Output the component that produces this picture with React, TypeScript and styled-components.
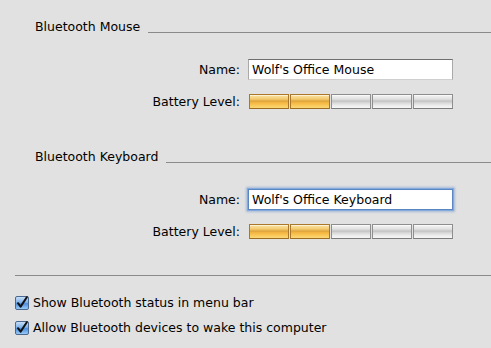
import React from "react";
import styled, { createGlobalStyle } from "styled-components";

const Global = createGlobalStyle`
  html, body { margin: 0; padding: 0; }
  body {
    background: #e1e1e1;
    font-family: "DejaVu Sans", "Liberation Sans", sans-serif;
    font-size: 12.5px;
    color: #000;
  }
`;

const Page = styled.div`
  width: 491px;
  height: 348px;
  overflow: hidden;
  display: flex;
  flex-direction: column;
  padding-top: 19px;
  box-sizing: border-box;
`;

const Section = styled.section<{ $gap?: number }>`
  display: flex;
  flex-direction: column;
  padding-left: 35px;
  margin-top: ${(p) => p.$gap ?? 0}px;
`;

const Header = styled.div`
  display: flex;
  align-items: flex-end;
  height: 15px;
  line-height: 15px;
`;

const Title = styled.span`
  white-space: nowrap;
`;

const Rule = styled.div`
  flex: 1;
  height: 0;
  border-top: 1px solid #8a8a8a;
  margin-left: 8px;
  margin-bottom: 1px;
`;

const Form = styled.div`
  display: grid;
  grid-template-columns: 205px 205px;
  grid-template-rows: 21px 15px;
  column-gap: 8px;
  row-gap: 14px;
  margin-top: 25px;
  align-items: center;
`;

const Label = styled.label`
  text-align: right;
  white-space: nowrap;
  line-height: 15px;
`;

const Field = styled.div<{ $focused?: boolean }>`
  box-sizing: border-box;
  height: 21px;
  background: #fff;
  border: 1px solid #a9a9a9;
  border-top-color: #6f6f6f;
  border-bottom-color: #cfcfcf;
  padding: 0 3px;
  display: flex;
  align-items: center;
  white-space: nowrap;
  ${(p) =>
    p.$focused &&
    `
    border-color: #5b86c4;
    box-shadow: 0 0 0 1px #86a9dc, 0 0 2px 2px rgba(96, 140, 210, 0.45);
  `}
`;

const Battery = styled.div`
  display: flex;
  gap: 1px;
  height: 15px;
  margin-left: 1px;
`;

const Segment = styled.div<{ $on: boolean }>`
  box-sizing: border-box;
  flex: 1;
  height: 15px;
  border: 1px solid ${(p) => (p.$on ? "#a9782c" : "#8e8e8e")};
  border-bottom-color: ${(p) => (p.$on ? "#9a6c22" : "#7a7a7a")};
  background: ${(p) =>
    p.$on
      ? "linear-gradient(to bottom, #fbe2a4 0%, #f3cc72 30%, #dda43c 48%, #f2b33e 56%, #f9c95a 80%, #fbd878 100%)"
      : "linear-gradient(to bottom, #f4f4f4 0%, #e2e2e2 30%, #c3c3c3 48%, #d3d3d3 56%, #ececec 80%, #f6f6f6 100%)"};
  box-shadow: inset 0 1px 0 rgba(255, 255, 255, 0.55);
`;

const Separator = styled.div`
  margin-top: 36px;
  margin-left: 15px;
  height: 0;
  border-top: 1px solid #8a8a8a;
`;

const Checks = styled.div`
  display: flex;
  flex-direction: column;
  gap: 9px;
  padding-left: 15px;
  margin-top: 19px;
`;

const CheckRow = styled.label`
  display: flex;
  align-items: center;
  gap: 4px;
  height: 16px;
  line-height: 16px;
  white-space: nowrap;
`;

const CheckBox = () => (
  <svg width="14" height="14" viewBox="0 0 14 14">
    <defs>
      <linearGradient id="cbg" x1="0" y1="0" x2="0" y2="1">
        <stop offset="0" stopColor="#cfe3f8" />
        <stop offset="0.45" stopColor="#7fb2ea" />
        <stop offset="0.55" stopColor="#4d8fdc" />
        <stop offset="1" stopColor="#9fd0fa" />
      </linearGradient>
    </defs>
    <rect x="0.5" y="0.5" width="13" height="13" rx="1.5" fill="url(#cbg)" stroke="#49678f" />
    <path d="M3 7.2 L5.6 10.6 L11.8 1.2" fill="none" stroke="#111" strokeWidth="2" strokeLinecap="round" strokeLinejoin="round" />
  </svg>
);

type Device = { title: string; name: string; level: number; focused?: boolean };

const devices: Device[] = [
  { title: "Bluetooth Mouse", name: "Wolf's Office Mouse", level: 2 },
  { title: "Bluetooth Keyboard", name: "Wolf's Office Keyboard", level: 2, focused: true },
];

export default function App() {
  return (
    <>
      <Global />
      <Page>
        {devices.map((d, i) => (
          <Section key={d.title} $gap={i === 0 ? 0 : 40}>
            <Header>
              <Title>{d.title}</Title>
              <Rule />
            </Header>
            <Form>
              <Label>Name:</Label>
              <Field $focused={d.focused}>{d.name}</Field>
              <Label>Battery Level:</Label>
              <Battery>
                {[0, 1, 2, 3, 4].map((n) => (
                  <Segment key={n} $on={n < d.level} />
                ))}
              </Battery>
            </Form>
          </Section>
        ))}
        <Separator />
        <Checks>
          <CheckRow>
            <CheckBox />
            Show Bluetooth status in menu bar
          </CheckRow>
          <CheckRow>
            <CheckBox />
            Allow Bluetooth devices to wake this computer
          </CheckRow>
        </Checks>
      </Page>
    </>
  );
}
